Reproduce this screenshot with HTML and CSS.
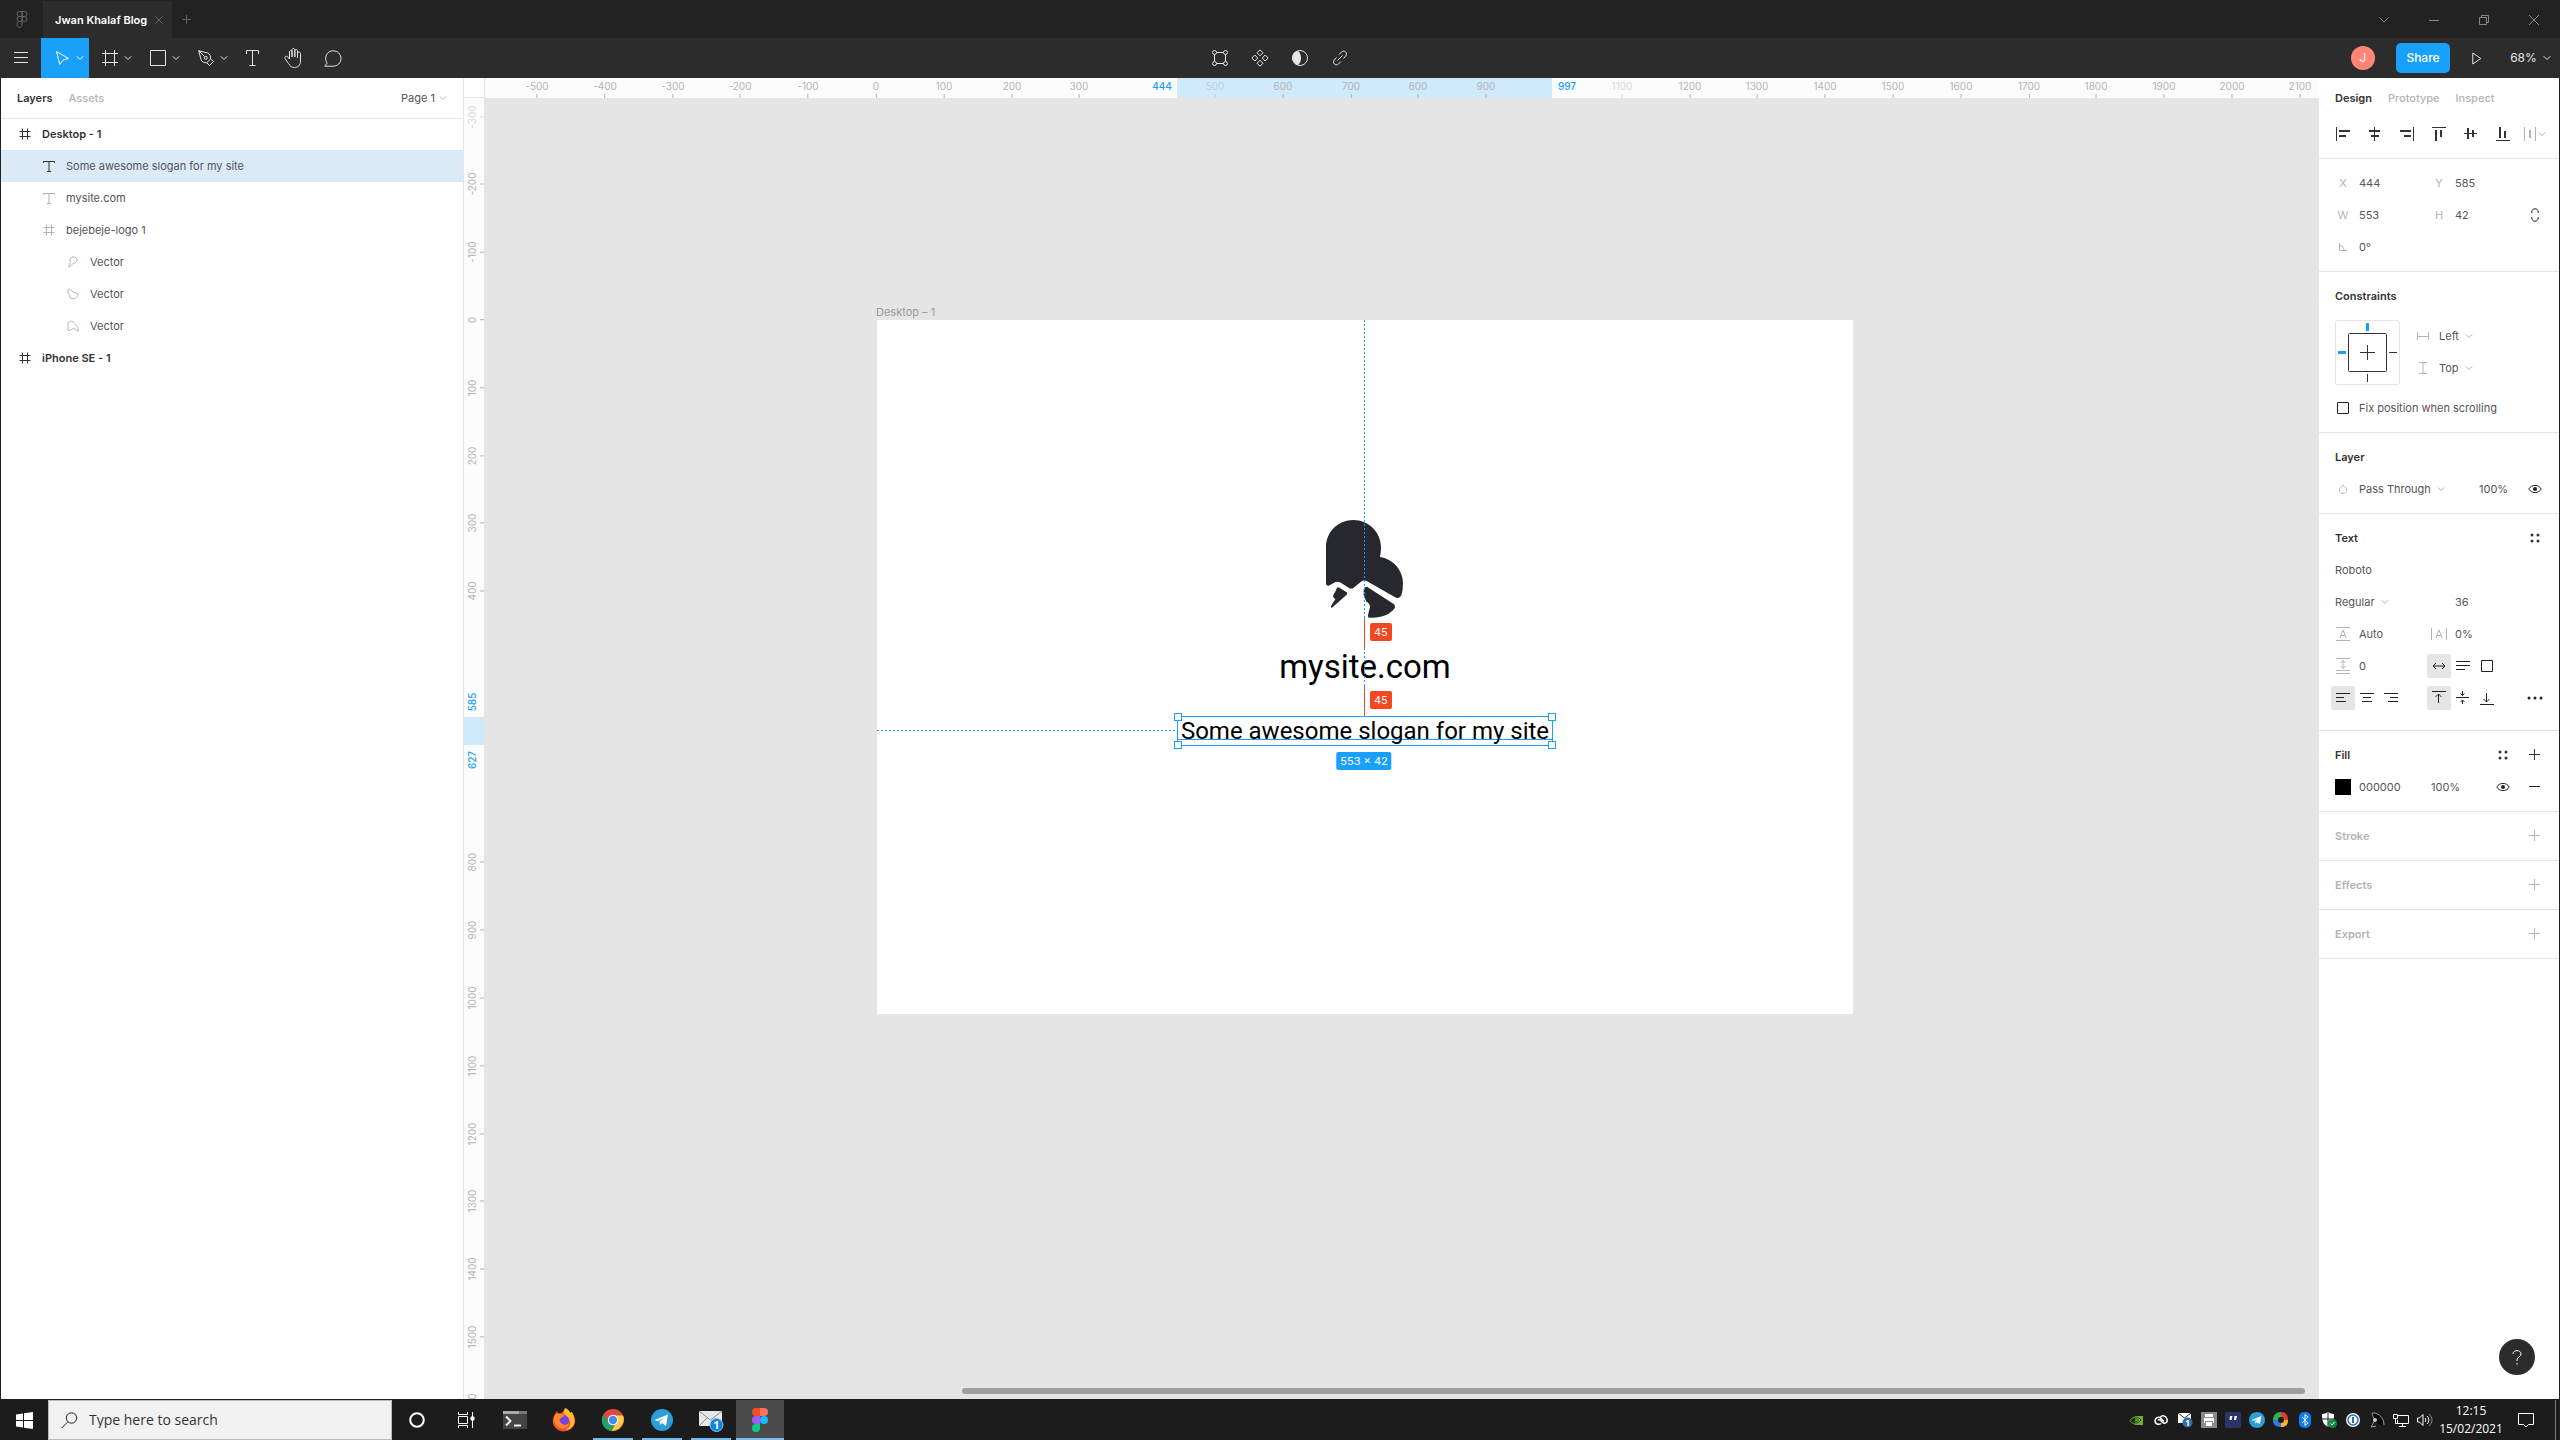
FILE: index.html
```html
<!DOCTYPE html>
<html lang="en">
<head>
    <meta charset="UTF-8">
    <meta name="viewport" content="width=device-width, initial-scale=1.0">
    <title>Jwan Khalaf Blog</title>
    <link rel="stylesheet" href="styles.css">
</head>
<body>
<svg class="sprite" aria-hidden="true">
    <symbol id="chev" viewBox="0 0 8 8"><path d="M.8 2.300L4 5.500l3.200-3.200"/></symbol>
    <symbol id="frame" viewBox="0 0 16 16"><path d="M3.500 0v16M12.500 0v16M0 3.500h16M0 12.500h16"/></symbol>
    <symbol id="hash" viewBox="0 0 12 12"><path d="M3.500.5v11M8.500.5v11M.5 3.500h11M.5 8.500h11"/></symbol>
    <symbol id="type" viewBox="0 0 12 12"><path d="M.5 3V1.500h11V3M6 1.500v10M4 11.500h4"/></symbol>
    <symbol id="plus" viewBox="0 0 12 12"><path d="M5.500 0v11M0 5.500h11"/></symbol>
    <symbol id="eye" viewBox="0 0 14 10"><path d="M.8 5C3.500.2 10.500.2 13.200 5 10.500 9.800 3.500 9.800.8 5z"/><circle class="solid" cx="7" cy="5" r="2"/></symbol>
    <symbol id="dots" viewBox="0 0 10 10"><g class="solid"><circle cx="2" cy="2" r="1.500"/><circle cx="8" cy="2" r="1.500"/><circle cx="2" cy="8" r="1.500"/><circle cx="8" cy="8" r="1.500"/></g></symbol>
    <symbol id="plane" viewBox="0 0 22 22"><circle cx="11" cy="11" r="11" fill="#2a9fd8" stroke="none"/><path fill="#fff" stroke="none" d="M3.500 11L17 5.500 15 17l-4-3-2 2-.5-3.500 5-4L7 12.200z"/></symbol>
</svg>

<header class="titlebar">
    <button class="home" aria-label="Home">
        <svg class="stroke" width="12" height="17" viewBox="0 0 12 17"><path d="M3.500.5H6v5H3.500a2.500 2.500 0 0 1 0-5zM6 .5h2.500a2.500 2.500 0 0 1 0 5H6zM3.500 5.500H6v5H3.500a2.500 2.500 0 0 1 0-5zM6 13.500v-3H3.500a2.500 2.500 0 0 0-2.500 3c0 4 5 4 5 0z"/><circle cx="8.500" cy="8" r="2.500"/></svg>
    </button>
    <div class="tab">
        <span>Jwan Khalaf Blog</span>
        <button aria-label="Close tab"><svg class="stroke" width="8" height="8" viewBox="0 0 8 8"><path d="M.5.5l7 7M7.500.5l-7 7"/></svg></button>
    </div>
    <button class="newtab" aria-label="New tab"><svg class="stroke" width="10" height="10" viewBox="0 0 10 10"><path d="M4.500 0v9M0 4.500h9"/></svg></button>
    <div class="window-buttons">
        <button aria-label="More"><svg class="stroke" width="10" height="6" viewBox="0 0 10 6"><path d="M.5.5L5 5 9.500.5"/></svg></button>
        <button aria-label="Minimize"><svg class="stroke" width="10" height="10" viewBox="0 0 10 10"><path d="M0 5.500h10"/></svg></button>
        <button aria-label="Restore"><svg class="stroke" width="10" height="10" viewBox="0 0 10 10"><path d="M.5 2.500h7v7h-7zM2.500 2.500v-2h7v7h-2"/></svg></button>
        <button aria-label="Close"><svg class="stroke" width="10" height="10" viewBox="0 0 10 10"><path d="M0 0l10 10M10 0L0 10"/></svg></button>
    </div>
</header>

<nav class="toolbar">
    <div class="tools">
        <button aria-label="Menu"><svg class="stroke" width="14" height="12" viewBox="0 0 14 12"><path d="M0 .5h14M0 5.500h14M0 10.500h14"/></svg></button>
        <button class="wide active" aria-label="Move"><svg class="stroke" width="16" height="16" viewBox="0 0 16 16"><path d="M2.500 1.500l12 7-5.500 1.500-3.300 4.500z"/></svg><svg class="stroke" width="8" height="8"><use href="#chev"/></svg></button>
        <button class="wide" aria-label="Frame"><svg class="stroke" width="16" height="16"><use href="#frame"/></svg><svg class="stroke" width="8" height="8"><use href="#chev"/></svg></button>
        <button class="wide" aria-label="Rectangle"><svg class="stroke" width="16" height="16" viewBox="0 0 16 16"><path d="M.5.5h15v15H.5z"/></svg><svg class="stroke" width="8" height="8"><use href="#chev"/></svg></button>
        <button class="wide" aria-label="Pen"><svg class="stroke" width="16" height="16" viewBox="0 0 16 16"><path d="M.7.7l9 2.300c2 .8 3.300 3.500 2.800 6l-3.800 3.800C6 13 3.500 11.500 3 9.500zM.7.7l6 6"/><path d="M12.500 9l3 2.500-4 4-2.800-2.700"/><circle cx="7.800" cy="7.800" r="1.500"/></svg><svg class="stroke" width="8" height="8"><use href="#chev"/></svg></button>
        <button aria-label="Text"><svg class="stroke" width="14" height="16" viewBox="0 0 14 16"><path d="M.5 4V.5h12V4M6.500 .5v15M3.500 15.500h6"/></svg></button>
        <button aria-label="Hand"><svg class="stroke" width="18" height="20" viewBox="0 0 18 20"><path d="M5.500 11V4c0-2 2.500-2 2.500 0v5V2c0-2 2.800-2 2.800 0v7V3c0-2 2.700-2 2.700 0v7-4.500c0-2 3-2 3 0V13c0 4-2.500 6.500-6 6.500-3 0-4.500-1.500-6-4l-3.500-5C.2 8.500 2.500 7.500 3.800 9l1.700 2"/></svg></button>
        <button aria-label="Comment"><svg class="stroke" width="18" height="17" viewBox="0 0 18 17"><path d="M.8 16.200h8.200c4.500 0 8-3.300 8-7.700S13.500.8 9.200.8C4.700.8 1.700 4.200 1.700 8.500c0 2 .7 3.500 1.500 4.500z"/></svg></button>
    </div>
    <div class="tools">
        <button aria-label="Edit object"><svg class="stroke" width="16" height="16" viewBox="0 0 16 16"><path d="M4.500 2.500h7M4.500 13.500h7M2.500 4.500v7M13.500 4.500v7"/><circle cx="2.500" cy="2.500" r="2"/><circle cx="13.500" cy="2.500" r="2"/><circle cx="2.500" cy="13.500" r="2"/><circle cx="13.500" cy="13.500" r="2"/></svg></button>
        <button aria-label="Create component"><svg class="stroke" width="18" height="18" viewBox="0 0 18 18"><path d="M9 .8l3 3-3 3-3-3zM9 11.200l3 3-3 3-3-3zM3.800 6l3 3-3 3-3-3zM14.200 6l3 3-3 3-3-3z"/></svg></button>
        <button aria-label="Mask"><svg class="stroke" width="16" height="16" viewBox="0 0 16 16"><circle cx="8" cy="8" r="7.500"/><path class="solid" d="M6 1C.5 2 0 6 .5 9.500c.5 3 3 5 5.500 5.500 4-3 4-11 0-14z"/></svg></button>
        <button aria-label="Link"><svg class="stroke" width="16" height="16" viewBox="0 0 16 16"><path d="M7 4.500L9.500 2c3-2.500 6.500 1 4.200 4l-2.200 2.500M9 11.500L6.500 14c-3 2.500-6.500-1-4.200-4l2.200-2.500M5.500 10.500l5-5"/></svg></button>
    </div>
    <div class="tools tools-end">
        <span class="avatar">J</span>
        <button class="share">Share</button>
        <button class="play" aria-label="Present"><svg class="stroke" width="10" height="13" viewBox="0 0 10 13"><path d="M.8 1l8 5.500-8 5.500z"/></svg></button>
        <button class="zoom">68%<svg class="stroke" width="8" height="8"><use href="#chev"/></svg></button>
    </div>
</nav>

<div class="workspace">
    <aside class="layers">
        <div class="layers-head">
            <button class="on">Layers</button>
            <button>Assets</button>
            <button class="page">Page 1<svg class="stroke" width="8" height="8"><use href="#chev"/></svg></button>
        </div>
        <ul>
            <li class="top"><svg class="stroke" width="12" height="12"><use href="#hash"/></svg>Desktop - 1</li>
            <li class="child selected"><svg class="stroke" width="12" height="12"><use href="#type"/></svg>Some awesome slogan for my site</li>
            <li class="child"><svg class="stroke" width="12" height="12"><use href="#type"/></svg>mysite.com</li>
            <li class="child"><svg class="stroke" width="12" height="12"><use href="#hash"/></svg>bejebeje-logo 1</li>
            <li class="leaf"><svg class="stroke" width="12" height="12" viewBox="0 0 12 12"><path d="M4 1.500c3-1.500 6 0 6 2.500 0 2-2 3-4 3.500L2.500 11C1 11 2 9 3.500 6.500 2.500 5 3 3 4 1.500z"/></svg>Vector</li>
            <li class="leaf"><svg class="stroke" width="12" height="12" viewBox="0 0 12 12"><path d="M1 1.500c1-1 2 0 3 1l7 4c.5.5-1 3.500-3.500 4C5 11 3 10.500 2.800 9c1-2-1.300-2.500-1.800-4z"/></svg>Vector</li>
            <li class="leaf"><svg class="stroke" width="12" height="12" viewBox="0 0 12 12"><path d="M1 10.500V4C1 .2 7.500.2 8 4.500c2 1 3.500 3.500 3.300 6.500-2 .5-2-2-4-2.500-2 0-4 2.500-6.300 2z"/></svg>Vector</li>
            <li class="top"><svg class="stroke" width="12" height="12"><use href="#hash"/></svg>iPhone SE - 1</li>
        </ul>
    </aside>

    <main class="stage">
        <div class="corner"></div>
        <div class="ruler ruler-x" id="rulerX"></div>
        <div class="ruler ruler-y" id="rulerY"></div>
        <div class="canvas">
            <span class="frame-label">Desktop – 1</span>
            <div class="artboard">
                <svg class="logo" width="77" height="98" viewBox="0 0 231 294"><path d="M0 82C0 35 37 0 82 0c46 0 83 37 83 82q0 15-3 29c38 5 69 39 69 79q0 20-5 36-4 10-16 7l-88-50q-8-4-17 2l-23 19q-6 4-14-1l-26-16q-8-3-15 0L8 197q-8 2-8-7z"/><path d="M113 208q1-9 11-7l78 50q7 5 4 14c-16 20-41 30-76 28q-5 0-4-8l6-25q-1-11-11-15l-8-20z"/><path d="M33 203q2-2 7 0l22 14q3 3 0 7l-44 39q-5 1-3-5l13-20-7-8q1-8 6-13z"/></svg>
                <div class="site-name">mysite.com</div>
                <div class="guide-x"></div>
                <div class="guide-y"></div>
                <div class="measure first"><span>45</span></div>
                <div class="measure second"><span>45</span></div>
                <div class="selection">
                    <span class="slogan">Some awesome slogan for my site</span>
                    <i class="handle tl"></i><i class="handle tr"></i><i class="handle bl"></i><i class="handle br"></i>
                </div>
                <span class="size">553 × 42</span>
            </div>
            <div class="scrollbar"></div>
        </div>
    </main>

    <aside class="props">
        <div class="tabs">
            <button class="on">Design</button>
            <button>Prototype</button>
            <button>Inspect</button>
        </div>
        <div class="align-row">
            <button aria-label="Align left"><svg width="14" height="14" viewBox="0 0 14 14"><path d="M0 0h1v14H0zM3 3h11v2H3zM3 8h7v2H3z"/></svg></button>
            <button aria-label="Align horizontal centers"><svg width="12" height="14" viewBox="0 0 12 14"><path d="M5 0h1v14H5zM0 3h11v2H0zM2 8h8v2H2z"/></svg></button>
            <button aria-label="Align right"><svg width="14" height="14" viewBox="0 0 14 14"><path d="M13 0h1v14h-1zM0 3h11v2H0zM4 8h7v2H4z"/></svg></button>
            <button aria-label="Align top"><svg width="14" height="14" viewBox="0 0 14 14"><path d="M0 0h14v1H0zM3 3h2v11H3zM8 3h2v7H8z"/></svg></button>
            <button aria-label="Align vertical centers"><svg width="14" height="12" viewBox="0 0 14 12"><path d="M0 5h13v1H0zM3 0h2v11H3zM8 2h2v7H8z"/></svg></button>
            <button aria-label="Align bottom"><svg width="14" height="14" viewBox="0 0 14 14"><path d="M0 13h14v1H0zM3 0h2v11H3zM8 4h2v7H8z"/></svg></button>
            <button class="dim" aria-label="Distribute"><svg width="12" height="14" viewBox="0 0 12 14"><path d="M0 0h1v14H0zM11 0h1v14h-1zM5 3h2v8H5z"/></svg><svg class="stroke" width="8" height="8"><use href="#chev"/></svg></button>
        </div>

        <section>
            <div class="row">
                <label for="px">X</label><input id="px" value="444">
                <label for="py">Y</label><input id="py" value="585">
            </div>
            <div class="row">
                <label for="pw">W</label><input id="pw" value="553">
                <label for="ph">H</label><input id="ph" value="42">
                <button aria-label="Constrain proportions"><svg class="stroke" width="8" height="14" viewBox="0 0 8 14"><path d="M.8 5V4c0-4.300 6.400-4.300 6.400 0v1M.8 9v1c0 4.300 6.400 4.300 6.400 0V9"/></svg></button>
            </div>
            <div class="row">
                <label for="pr" aria-label="Rotation"><svg class="stroke" width="8" height="8" viewBox="0 0 8 8"><path d="M.5 0v7.500H8M.5 2.500c3 0 4.500 2 4.500 5"/></svg></label><input id="pr" value="0°">
            </div>
        </section>

        <section>
            <h2>Constraints</h2>
            <div class="constraints">
                <svg class="pins" width="64" height="64" viewBox="0 0 64 64"><rect x=".5" y=".5" width="64" height="64" rx="2" stroke="#e5e5e5"/><rect x="13.500" y="13.500" width="38" height="38" rx="1" stroke="#333"/><path d="M32.500 25v15M25 32.500h15M54 32.500h8M32.500 54v8" stroke="#333"/><path d="M32.500 3v8M3 32.500h8" stroke="#18a0fb" stroke-width="3"/></svg>
                <div class="pin-selects">
                    <div class="drop"><svg class="stroke" width="12" height="8" viewBox="0 0 12 8"><path d="M.5 0v8M11.500 0v8M.5 4.500h11"/></svg><select aria-label="Horizontal constraint"><option>Left</option></select><svg class="stroke" width="8" height="8"><use href="#chev"/></svg></div>
                    <div class="drop"><svg class="stroke" width="8" height="12" viewBox="0 0 8 12"><path d="M0 .5h8M0 11.500h8M4 .5v11"/></svg><select aria-label="Vertical constraint"><option>Top</option></select><svg class="stroke" width="8" height="8"><use href="#chev"/></svg></div>
                </div>
            </div>
            <div class="check"><input type="checkbox" id="fix"><label for="fix">Fix position when scrolling</label></div>
        </section>

        <section>
            <h2>Layer</h2>
            <div class="row layer-row">
                <div class="drop"><svg class="stroke" width="8" height="10" viewBox="0 0 8 10"><path d="M4 .8c2 2 3.500 3.200 3.500 5.200 0 4.500-7 4.500-7 0C.5 4 2 2.800 4 .8z"/></svg><select aria-label="Blend mode"><option>Pass Through</option></select><svg class="stroke" width="8" height="8"><use href="#chev"/></svg></div>
                <input aria-label="Opacity" value="100%">
                <button aria-label="Visible"><svg class="stroke" width="14" height="10"><use href="#eye"/></svg></button>
            </div>
        </section>

        <section class="text-section">
            <div class="head"><h2>Text</h2><button aria-label="Styles"><svg width="10" height="10"><use href="#dots"/></svg></button></div>
            <div class="plain"><select aria-label="Font"><option>Roboto</option></select></div>
            <div class="plain two">
                <div><select aria-label="Weight"><option>Regular</option></select><svg class="stroke" width="8" height="8"><use href="#chev"/></svg></div>
                <input aria-label="Font size" value="36">
            </div>
            <div class="row">
                <label for="lh" aria-label="Line height"><svg class="stroke" width="14" height="14" viewBox="0 0 14 14"><path d="M0 .5h14M0 13.500h14M4 11l3-8 3 8M5 8.500h4"/></svg></label><input id="lh" value="Auto">
                <label for="ls" aria-label="Letter spacing"><svg class="stroke" width="16" height="12" viewBox="0 0 16 12"><path d="M.5 0v12M15.500 0v12M5 10l3-8 3 8M6 7.500h4"/></svg></label><input id="ls" value="0%">
            </div>
            <div class="row">
                <label for="ps" aria-label="Paragraph spacing"><svg class="stroke" width="14" height="16" viewBox="0 0 14 16"><path d="M0 .5h14M0 12.500h14M0 15.500h14M7 2.500v8M4.500 5L7 2.500 9.500 5M4.500 8L7 10.500 9.500 8"/></svg></label><input id="ps" value="0">
                <div class="group">
                    <button class="on" aria-label="Auto width"><svg class="stroke" width="14" height="8" viewBox="0 0 14 8"><path d="M1 4h12M4 1L1 4l3 3M10 1l3 3-3 3"/></svg></button>
                    <button aria-label="Auto height"><svg class="stroke" width="14" height="10" viewBox="0 0 14 10"><path d="M0 .5h14M0 4.500h14M0 8.500h9"/></svg></button>
                    <button aria-label="Fixed size"><svg class="stroke" width="12" height="12" viewBox="0 0 12 12"><path d="M.5.5h11v11H.5z"/></svg></button>
                </div>
            </div>
            <div class="aligns">
                <div class="group">
                    <button class="on" aria-label="Text left"><svg class="stroke" width="14" height="10" viewBox="0 0 14 10"><path d="M0 .5h14M0 4.500h8M0 8.500h10"/></svg></button>
                    <button aria-label="Text center"><svg class="stroke" width="14" height="10" viewBox="0 0 14 10"><path d="M0 .5h14M3 4.500h8M2 8.500h10"/></svg></button>
                    <button aria-label="Text right"><svg class="stroke" width="14" height="10" viewBox="0 0 14 10"><path d="M0 .5h14M6 4.500h8M4 8.500h10"/></svg></button>
                </div>
                <div class="group">
                    <button class="on" aria-label="Text top"><svg class="stroke" width="14" height="14" viewBox="0 0 14 14"><path d="M0 .5h14M6.500 3v9M3.500 6l3-3 3 3"/></svg></button>
                    <button aria-label="Text middle"><svg class="stroke" width="14" height="14" viewBox="0 0 14 14"><path d="M0 6.500h13M6.500 0v4.500M4.500 2.500l2 2 2-2M6.500 13V9M4.500 11l2-2 2 2"/></svg></button>
                    <button aria-label="Text bottom"><svg class="stroke" width="14" height="14" viewBox="0 0 14 14"><path d="M0 13.500h14M6.500 2v9M3.500 8l3 3 3-3"/></svg></button>
                </div>
                <button class="more" aria-label="Type details"><svg width="16" height="4" viewBox="0 0 16 4"><circle cx="2" cy="2" r="1.500"/><circle cx="8" cy="2" r="1.500"/><circle cx="14" cy="2" r="1.500"/></svg></button>
            </div>
        </section>

        <section>
            <div class="head"><h2>Fill</h2><button aria-label="Fill styles"><svg width="10" height="10"><use href="#dots"/></svg></button><button aria-label="Add fill"><svg class="stroke" width="12" height="12"><use href="#plus"/></svg></button></div>
            <div class="row fill-row">
                <button aria-label="Fill colour"><i class="swatch"></i></button><input aria-label="Hex" value="000000"><input aria-label="Fill opacity" value="100%">
                <button aria-label="Toggle fill"><svg class="stroke" width="14" height="10"><use href="#eye"/></svg></button>
                <button aria-label="Remove fill"><svg class="stroke" width="12" height="12" viewBox="0 0 12 12"><path d="M0 5.500h11"/></svg></button>
            </div>
        </section>
        <section class="empty"><div class="head"><h2>Stroke</h2><button aria-label="Add stroke"><svg class="stroke" width="12" height="12"><use href="#plus"/></svg></button></div></section>
        <section class="empty"><div class="head"><h2>Effects</h2><button aria-label="Add effect"><svg class="stroke" width="12" height="12"><use href="#plus"/></svg></button></div></section>
        <section class="empty last"><div class="head"><h2>Export</h2><button aria-label="Add export"><svg class="stroke" width="12" height="12"><use href="#plus"/></svg></button></div></section>
        <button class="help" aria-label="Help"><svg class="stroke" width="10" height="15" viewBox="0 0 10 15"><path d="M1 4c0-4.500 8-4.500 8 0 0 2.800-4 3-4 6v1M5 13v1.500"/></svg></button>
    </aside>
</div>

<footer class="taskbar">
    <button class="start" aria-label="Start"><svg width="17" height="17" viewBox="0 0 17 17"><path fill="#fff" d="M0 2.500l7-1V8H0zM8 1.300L17 0v8H8zM0 9h7v6.500l-7-1zM8 9h9v8l-9-1.300z"/></svg></button>
    <div class="search">
        <svg class="stroke" width="17" height="17" viewBox="0 0 17 17"><circle cx="10.500" cy="6" r="5.200"/><path d="M6.800 9.800L.8 16"/></svg>
        <input type="text" aria-label="Search" placeholder="Type here to search">
    </div>
    <div class="apps">
        <button aria-label="Cortana"><svg width="16" height="16" viewBox="0 0 16 16"><circle cx="8" cy="8" r="6.800" fill="none" stroke="#fff" stroke-width="2"/></svg></button>
        <button aria-label="Task view"><svg class="stroke white" width="18" height="16" viewBox="0 0 18 16"><path d="M1.500 0v2.500h9V0M1.500 4.500h9v7h-9zM1.500 16v-2.500h9V16M15.500 0v16"/><path d="M14 5h3v3h-3z" fill="#fff"/></svg></button>
        <button aria-label="Terminal"><svg width="24" height="18" viewBox="0 0 24 18"><path fill="#444" d="M0 0h24v18H0z"/><path fill="#aaa" d="M0 0h16v3H0z"/><path fill="#777" d="M16 0h8v3h-8z"/><path d="M3 5.500l4.500 4.500L3 14.500M11 14.500h7" fill="none" stroke="#eee" stroke-width="2"/></svg></button>
        <button aria-label="Firefox"><svg width="24" height="24" viewBox="0 0 24 24"><path fill="#ff4b3a" d="M3 6l2-3 1.500 3C10 5 12 3.500 13 0c3 1 4.500 3 5 5l2-1c4 6 4 11 1 15-5 6-15 6-19-1C0 14 .5 10 3 6z"/><path fill="#ffbd2e" d="M13 0c3 1 4.500 3 5 5l1.500-1c3 5 4 9 2 13-1.500 3-5 5-8 5 5-3 6-8 3-12-1-2-4-3-5-5C11.500 4 12.500 2 13 0z"/><circle cx="12" cy="12.500" r="5" fill="#7542e5"/><path fill="#ff8b22" d="M3 7c3-2 7-2 9 1l-3 2c-2 1-2 3 0 5 3 3 6 2 8 0-1 5-7 7-11 4-4-3-5-8-3-12z"/></svg></button>
        <button class="open" aria-label="Chrome"><svg width="24" height="24" viewBox="0 0 24 24"><circle cx="12" cy="12" r="11" fill="#dd4b3e"/><path fill="#20a464" d="M2.500 6.500l5 8 6 3-3.300 5.500C3 22-2 13.500 2.500 6.500z"/><path fill="#ffcd42" d="M12 7.500h10c3 7-3 15.500-11.500 15.500l5.500-9z"/><circle cx="12" cy="12" r="5.200" fill="#fff"/><circle cx="12" cy="12" r="4.200" fill="#4587f3"/></svg></button>
        <button class="open" aria-label="Telegram"><svg width="22" height="22"><use href="#plane"/></svg></button>
        <button class="open" aria-label="Mail"><svg width="26" height="24" viewBox="0 0 26 24"><path fill="#e8e8e8" d="M1 3h23v15H1z"/><path d="M1 3l11.500 9L24 3M1 18l8-8M24 18l-8-8" fill="none" stroke="#888"/><circle cx="18.500" cy="17" r="6.500" fill="#0a84e0" stroke="#8cc4f0"/><text x="18.500" y="21" text-anchor="middle" class="badge">1</text></svg></button>
        <button class="open current" aria-label="Figma"><svg width="16" height="24" viewBox="0 0 16 24"><path fill="#f24e1e" d="M4 0h4v8H4a4 4 0 0 1 0-8z"/><path fill="#ff7262" d="M8 0h4a4 4 0 0 1 0 8H8z"/><path fill="#a259ff" d="M4 8h4v8H4a4 4 0 0 1 0-8z"/><circle cx="12" cy="12" r="4" fill="#1abcfe"/><path fill="#0acf83" d="M4 16h4v4a4 4 0 1 1-4-4z"/></svg></button>
    </div>
    <div class="tray">
        <svg width="16" height="16" viewBox="0 0 16 16"><path fill="#6fae2e" d="M6 4h8v9H6z"/><path d="M2.500 8.500c3-4.500 7-4 9.500-.5-3 4-7 4-9.500.5zM5 8.500c1.500-2 3-2 4.500 0-1.500 1.500-3 1.500-4.500 0z" fill="none" stroke="#2c4d12"/><path d="M6 5C3.500 5.500 2 7 1 8.500 2 10.500 4 12 6 12" fill="none" stroke="#6fae2e"/></svg>
        <svg width="16" height="16" viewBox="0 0 16 16"><path d="M8 11.500C6 13 2 12.500 2 8.500 2.500 5 6 4.500 8 6.500l3 3M5 8.500c1-2 3 0 4 1.500 3 3 6 0 5-3C13 3.500 9 3 7.500 5" fill="none" stroke="#fff" stroke-width="1.500"/></svg>
        <svg width="16" height="16" viewBox="0 0 16 16"><path fill="#fff" d="M1 1h13v10H1z"/><path d="M1 1l6.500 5L14 1" fill="none" stroke="#333"/><circle cx="10.500" cy="10.500" r="5" fill="#2d6da8"/><text x="10.500" y="14" text-anchor="middle" class="badge small">1</text></svg>
        <svg width="16" height="16" viewBox="0 0 16 16"><path fill="#8a8a8a" d="M0 0h16v16H0z"/><path fill="#fff" d="M4 2h8v3H4zM3 6h10v5h-1V9H4v2H3zM5 10h6v4H5z"/></svg>
        <svg width="16" height="16" viewBox="0 0 16 16"><rect width="16" height="16" rx="2" fill="#2b3467"/><path fill="#fff" d="M5 4h2.500L6.500 8h-2zM9.500 4H12l-1 4H9z"/></svg>
        <svg width="16" height="16"><use href="#plane"/></svg>
        <svg width="16" height="16" viewBox="0 0 16 16"><path fill="#2cb34a" d="M8 8H0c0-5 3-8 8-8z"/><path fill="#e33b2e" d="M8 8V0c5 0 7 3 7 8z"/><path fill="#f5b921" d="M8 8h7c0 5-2 7-7 7z"/><path fill="#2a7de1" d="M8 8v7c-5 0-8-2-8-7z"/><circle cx="8" cy="8" r="3" fill="#1c1c1c"/></svg>
        <svg width="16" height="16" viewBox="0 0 16 16"><rect x="2" width="12" height="16" rx="5" fill="#0a7cf0"/><path d="M5 5l6 6-3 2.500v-11L11 5l-6 6" fill="none" stroke="#fff"/></svg>
        <svg width="16" height="16" viewBox="0 0 16 16"><path fill="#fff" d="M1 2c3 0 4-1 6-2 2 1 3 2 6 2 0 7-1 10-6 13C2 12 1 9 1 2z"/><path d="M7 0v15M1 7h12" stroke="#1c1c1c"/><circle cx="11.500" cy="11.500" r="4.500" fill="#128a43"/><path d="M9.500 11.500l1.500 1.500 2.500-3" fill="none" stroke="#fff"/></svg>
        <svg width="16" height="16" viewBox="0 0 16 16"><circle cx="8" cy="8" r="7" fill="#fff"/><circle cx="8" cy="8" r="5" fill="none" stroke="#2b6cb0" stroke-width="1.500"/><path d="M8 5v6" stroke="#2b6cb0" stroke-width="2"/></svg>
        <svg width="16" height="16" viewBox="0 0 16 16"><path fill="#080808" d="M3 1c5-1 12 4 12 12-5 1-11-4-12-12z"/><path d="M3 1c5-1 12 4 12 12M3 1c1 4 2 6 4 8M6 8L2 15l5-1" fill="none" stroke="#999"/><circle cx="6" cy="8" r="2" fill="#ccc"/></svg>
        <svg class="stroke white" width="16" height="16" viewBox="0 0 16 16"><path d="M5 3.500h10.500v8H4.500V8M6 14.500h7M9.500 12v2.500M.5 2.500h4v4h-4zM2.500 6.500v5h2"/></svg>
        <svg class="stroke white" width="16" height="16" viewBox="0 0 16 16"><path d="M.5 6h2L6 2.500v11L2.500 10h-2zM8 6c1 1 1 3 0 4M10 4c2.500 2.500 2.500 5.500 0 8"/><path d="M12 2c4 4 4 8 0 12" opacity=".5"/></svg>
    </div>
    <div class="clock"><span>12:15</span><span>15/02/2021</span></div>
    <button class="notify" aria-label="Notifications"><svg class="stroke white" width="16" height="16" viewBox="0 0 16 16"><path d="M.5 1.500h15v11h-5L8 15l-2.500-2.500h-5z"/></svg></button>
    <span class="peek"></span>
</footer>

<script>
    // canvas zoom and where the artboard's origin sits inside each ruler
    var scale = 0.678;
    var origin = { x: 392, y: 222 };

    function drawRuler(id, axis, from, to, picked, hidden, faint) {
        var ruler = document.getElementById(id);
        var side = axis === "x" ? "left" : "top";
        var size = axis === "x" ? "width" : "height";
        var start = Math.round(origin[axis] + picked[0] * scale);
        var end = Math.round(origin[axis] + picked[1] * scale);
        var html = `<i class="range" style="${side}:${start}px;${size}:${end - start}px"></i>`;

        for (var v = from; v <= to; v += 100) {
            if (hidden.includes(v)) continue;
            var pos = Math.round(origin[axis] + v * scale);
            html += `<span class="mark ${faint.includes(v) ? "faint" : ""}" style="${side}:${pos}px">${v}</span>`;
        }
        html += `<span class="mark edge" style="${side}:${start - 15}px">${picked[0]}</span>`;
        html += `<span class="mark edge" style="${side}:${end + 15}px">${picked[1]}</span>`;
        ruler.innerHTML = html;
    }

    drawRuler("rulerX", "x", -500, 2100, [444, 997], [400, 1000], [500, 1100]);
    drawRuler("rulerY", "y", -300, 1600, [585, 627], [500, 600, 700], [-300]);
</script>
</body>
</html>
```
FILE: styles.css
```css
* {
    box-sizing: border-box;
}
body {
    margin: 0;
    height: 100vh;
    display: flex;
    flex-direction: column;
    overflow: hidden;
    background: #222;
    font-family: Inter, "Liberation Sans", sans-serif;
    font-size: 11px;
    line-height: 16px;
    color: #333;
}
button, input, select {
    font: inherit;
    color: inherit;
    background: none;
    border: 0;
    padding: 0;
    margin: 0;
    min-width: 0;
    outline: none;
}
button {
    display: flex;
    align-items: center;
    justify-content: center;
}
select {
    appearance: none;
    field-sizing: content;
}
svg {
    display: block;
    flex: none;
    fill: currentColor;
}
.stroke {
    fill: none;
    stroke: currentColor;
}
.solid {
    fill: currentColor;
    stroke: none;
}
.white {
    color: #fff;
}
.sprite {
    position: absolute;
    width: 0;
    height: 0;
}

/* title bar */
.titlebar {
    height: 38px;
    display: flex;
    background: #222;
    color: #666;
    padding: 1px 1px 0;
}
.home {
    width: 42px;
}
.tab {
    display: flex;
    align-items: center;
    gap: 8px;
    padding: 0 9px 0 12px;
    background: #2c2c2c;
    color: #fff;
    font-weight: 600;
}
.tab button {
    color: #666;
}
.newtab {
    width: 30px;
}
.window-buttons {
    margin-left: auto;
    display: flex;
}
.window-buttons button {
    width: 50px;
    color: #888;
}

/* toolbar */
.toolbar {
    height: 40px;
    display: grid;
    grid-template-columns: 1fr auto 1fr;
    padding: 0 1px;
    background: #2c2c2c;
    color: #e5e5e5;
}
.tools {
    display: flex;
}
.tools button {
    width: 40px;
}
.tools .wide {
    width: 48px;
    gap: 6px;
    padding-left: 8px;
}
.tools .active {
    background: #18a0fb;
    color: #fff;
}
.tools-end {
    justify-content: flex-end;
    align-items: center;
    font-size: 12px;
}
.avatar {
    width: 24px;
    height: 24px;
    line-height: 24px;
    margin-right: 21px;
    border-radius: 50%;
    background: #ff8577;
    color: #fff;
    text-align: center;
}
.tools .share {
    width: 54px;
    height: 30px;
    border-radius: 5px;
    background: #18a0fb;
    color: #fff;
    font-weight: 500;
}
.tools .play {
    width: 54px;
}
.tools .zoom {
    width: 55px;
    gap: 6px;
    padding-right: 2px;
}

/* main area */
.workspace {
    flex: 1;
    min-height: 0;
    display: flex;
    padding: 0 1px;
}
.layers {
    width: 463px;
    background: #fff;
    border-right: 1px solid #e5e5e5;
}
.layers-head {
    height: 40px;
    display: flex;
    gap: 16px;
    padding: 0 16px;
    font-weight: 600;
    box-shadow: 0 1px #e5e5e5;
}
.layers-head button, .tabs button {
    color: #b3b3b3;
    font-weight: 500;
}
.layers-head .on, .tabs .on {
    color: #333;
    font-weight: 600;
}
.layers-head .page {
    margin-left: auto;
    gap: 4px;
    color: #555;
    font-weight: 400;
}
.page svg {
    color: #b3b3b3;
}
.layers ul {
    list-style: none;
    margin: 0;
    padding: 0;
}
.layers li {
    height: 32px;
    display: flex;
    align-items: center;
    gap: 11px;
    padding-left: 42px;
    color: #555;
}
.layers li svg {
    color: #b3b3b3;
}
.layers .top {
    padding-left: 18px;
    font-weight: 600;
    color: #333;
}
.layers .leaf {
    padding-left: 66px;
}
.layers .top svg, .layers .selected svg {
    color: #333;
}
.layers .selected {
    background: #daebf7;
}

.stage {
    flex: 1;
    min-width: 0;
    display: grid;
    grid-template-columns: 20px 1fr;
    grid-template-rows: 20px 1fr;
    background: #e5e5e5;
}
.corner {
    background: #fff;
    border-bottom: 1px solid #e5e5e5;
}
.ruler {
    position: relative;
    overflow: hidden;
    background: #fcfcfc;
    color: #b3b3b3;
    font-size: 10px;
}
.ruler-x {
    box-shadow: inset 1px 0 #e5e5e5;
}
.range {
    position: absolute;
    background: #cfe9fd;
}
.ruler-x .range {
    height: 20px;
}
.ruler-y .range {
    width: 20px;
}
.mark {
    position: absolute;
    display: flex;
    align-items: center;
}
.mark::after {
    content: "";
    background: #b3b3b3;
}
.ruler-x .mark {
    flex-direction: column;
    transform: translateX(-50%);
}
.ruler-x .mark::after {
    width: 1px;
    height: 4px;
}
.ruler-y .mark {
    writing-mode: vertical-rl;
    flex-direction: column;
    transform: translateY(-50%) rotate(180deg);
    left: 0;
}
.ruler-y .mark::after {
    width: 4px;
    height: 1px;
}
.mark.faint {
    opacity: 0.5;
}
.mark.edge {
    color: #18a0fb;
    font-weight: 500;
}
.mark.edge::after {
    visibility: hidden;
}

/* canvas items sit at their own coordinates */
.canvas {
    position: relative;
    overflow: hidden;
}
.frame-label {
    position: absolute;
    left: 392px;
    top: 206px;
    color: #999;
}
.artboard {
    position: absolute;
    left: 393px;
    top: 222px;
    width: 976px;
    height: 694px;
    background: #fff;
    font-family: Roboto, sans-serif;
    color: #000;
}
.logo {
    position: absolute;
    left: 449px;
    top: 200px;
    fill: #272730;
}
.site-name {
    position: absolute;
    left: 0;
    right: 0;
    top: 328px;
    text-align: center;
    font-size: 33px;
    line-height: 38px;
}
.guide-x {
    position: absolute;
    left: 487px;
    top: 0;
    width: 1px;
    height: 396px;
    background: repeating-linear-gradient(#18a0fb 0 2px, transparent 2px 4px);
}
.guide-y {
    position: absolute;
    left: 0;
    top: 410px;
    width: 300px;
    height: 1px;
    background: repeating-linear-gradient(90deg, #18a0fb 0 2px, transparent 2px 4px);
}
.measure {
    position: absolute;
    left: 487px;
    height: 30px;
    padding: 5px 0 0 5px;
    border-left: 1px solid #f24822;
}
.measure.first {
    top: 298px;
}
.measure.second {
    top: 366px;
}
.measure span, .size {
    display: block;
    padding: 0 4px;
    border-radius: 2px;
    background: #f24822;
    color: #fff;
    font-family: Inter, sans-serif;
    font-size: 11px;
    line-height: 18px;
}
.size {
    position: absolute;
    left: 487px;
    top: 432px;
    transform: translateX(-50%);
    background: #18a0fb;
    white-space: nowrap;
}
.selection {
    position: absolute;
    left: 300px;
    top: 396px;
    width: 376px;
    height: 30px;
    border: 1px solid #18a0fb;
    text-align: center;
    font-size: 24px;
    line-height: 28px;
    white-space: nowrap;
}
.slogan {
    display: block;
    height: 23px;
    border-bottom: 1px solid #18a0fb;
}
.handle {
    position: absolute;
    width: 8px;
    height: 8px;
    background: #fff;
    border: 1px solid #18a0fb;
}
.tl, .tr {
    top: -4px;
}
.bl, .br {
    bottom: -4px;
}
.tl, .bl {
    left: -4px;
}
.tr, .br {
    right: -4px;
}
.scrollbar {
    position: absolute;
    left: 478px;
    right: 14px;
    bottom: 5px;
    height: 6px;
    border-radius: 3px;
    background: #9e9e9e;
}

/* properties panel */
.props {
    position: relative;
    width: 240px;
    background: #fff;
}
.tabs {
    height: 40px;
    display: flex;
    gap: 16px;
    padding: 0 16px;
}
.align-row {
    height: 40px;
    display: flex;
    padding: 0 8px 8px;
}
.align-row button {
    width: 32px;
}
.align-row .dim {
    gap: 2px;
    color: #b3b3b3;
}
.props section {
    border-top: 1px solid #e5e5e5;
    padding: 8px 0;
}
.props .text-section {
    padding-bottom: 16px;
}
.props .last {
    border-bottom: 1px solid #e5e5e5;
}
.props h2 {
    flex: 1;
    margin: 0;
    padding-left: 16px;
    font-size: 11px;
    font-weight: 600;
    line-height: 32px;
}
.head {
    display: flex;
    padding-right: 8px;
}
.head button {
    width: 32px;
}
.empty {
    color: #b3b3b3;
}
.row {
    height: 32px;
    display: grid;
    grid-template-columns: 32px 64px 32px 64px 32px;
    padding: 0 8px;
    color: #555;
}
.row label {
    display: flex;
    align-items: center;
    justify-content: center;
    color: #b3b3b3;
}
.row button, .group, .more {
    color: #222;
}
.constraints {
    display: flex;
    gap: 8px;
    padding: 8px 16px;
}
.pins {
    fill: none;
    overflow: visible;
}
.pin-selects {
    flex: 1;
}
.drop {
    height: 32px;
    display: grid;
    grid-template-columns: 32px auto 1fr;
    align-items: center;
    color: #555;
}
.drop svg {
    justify-self: center;
    color: #b3b3b3;
}
.drop select + svg {
    justify-self: start;
    margin-left: 6px;
}
.check {
    height: 32px;
    display: flex;
    align-items: center;
    gap: 10px;
    padding-left: 18px;
    color: #555;
}
.check input {
    appearance: none;
    width: 12px;
    height: 12px;
    border: 1px solid #222;
    border-radius: 1px;
}
.layer-row {
    grid-template-columns: 152px 40px 32px;
}
.plain {
    height: 32px;
    display: flex;
    padding: 0 16px;
    color: #555;
}
.two div {
    flex: none;
    width: 120px;
    display: flex;
    align-items: center;
    gap: 6px;
}
.two svg {
    color: #b3b3b3;
}
.group {
    display: flex;
    align-items: center;
}
.group button {
    width: 24px;
    height: 24px;
    border-radius: 2px;
}
.group .on {
    background: #e5e5e5;
}
.row .group {
    grid-column: 3 / 6;
    padding-left: 4px;
}
.aligns {
    height: 32px;
    display: grid;
    grid-template-columns: 96px 92px 32px;
    padding: 0 8px 0 12px;
}
.fill-row {
    grid-template-columns: 32px 72px 56px 32px 32px;
}
.swatch {
    width: 16px;
    height: 16px;
    background: #000;
}
.help {
    position: absolute;
    right: 24px;
    bottom: 24px;
    width: 36px;
    height: 36px;
    border-radius: 50%;
    background: #2c2c2c;
    color: #fff;
}

/* windows taskbar */
.taskbar {
    height: 41px;
    display: flex;
    padding-top: 1px;
    background: #1c1c1c;
    color: #fff;
    font-family: "Open Sans", sans-serif;
    font-size: 12px;
}
.start {
    width: 48px;
}
.search {
    width: 344px;
    display: flex;
    align-items: center;
    gap: 11px;
    padding-left: 12px;
    background: #f2f2f2;
    border: 1px solid #bbb;
    color: #222;
    font-size: 14px;
}
.search input {
    flex: 1;
}
.search input::placeholder {
    color: #333;
}
.apps {
    display: flex;
    gap: 1px;
    padding-left: 1px;
}
.apps button {
    width: 48px;
}
.open {
    position: relative;
}
.open::after {
    content: "";
    position: absolute;
    left: 4px;
    right: 4px;
    bottom: 0;
    height: 2px;
    background: #76b9ed;
}
.current {
    background: #4b4b4b;
}
.current::after {
    left: 0;
    right: 0;
}
.badge {
    fill: #fff;
    font-size: 11px;
    font-weight: 700;
}
.badge.small {
    font-size: 9px;
}
.tray {
    margin-left: auto;
    display: flex;
    align-items: center;
    gap: 8px;
}
.clock {
    width: 76px;
    display: flex;
    flex-direction: column;
    justify-content: center;
    align-items: center;
    line-height: 18px;
}
.notify {
    width: 34px;
}
.peek {
    width: 5px;
    margin-left: 12px;
    border-left: 1px solid #777;
}
```
